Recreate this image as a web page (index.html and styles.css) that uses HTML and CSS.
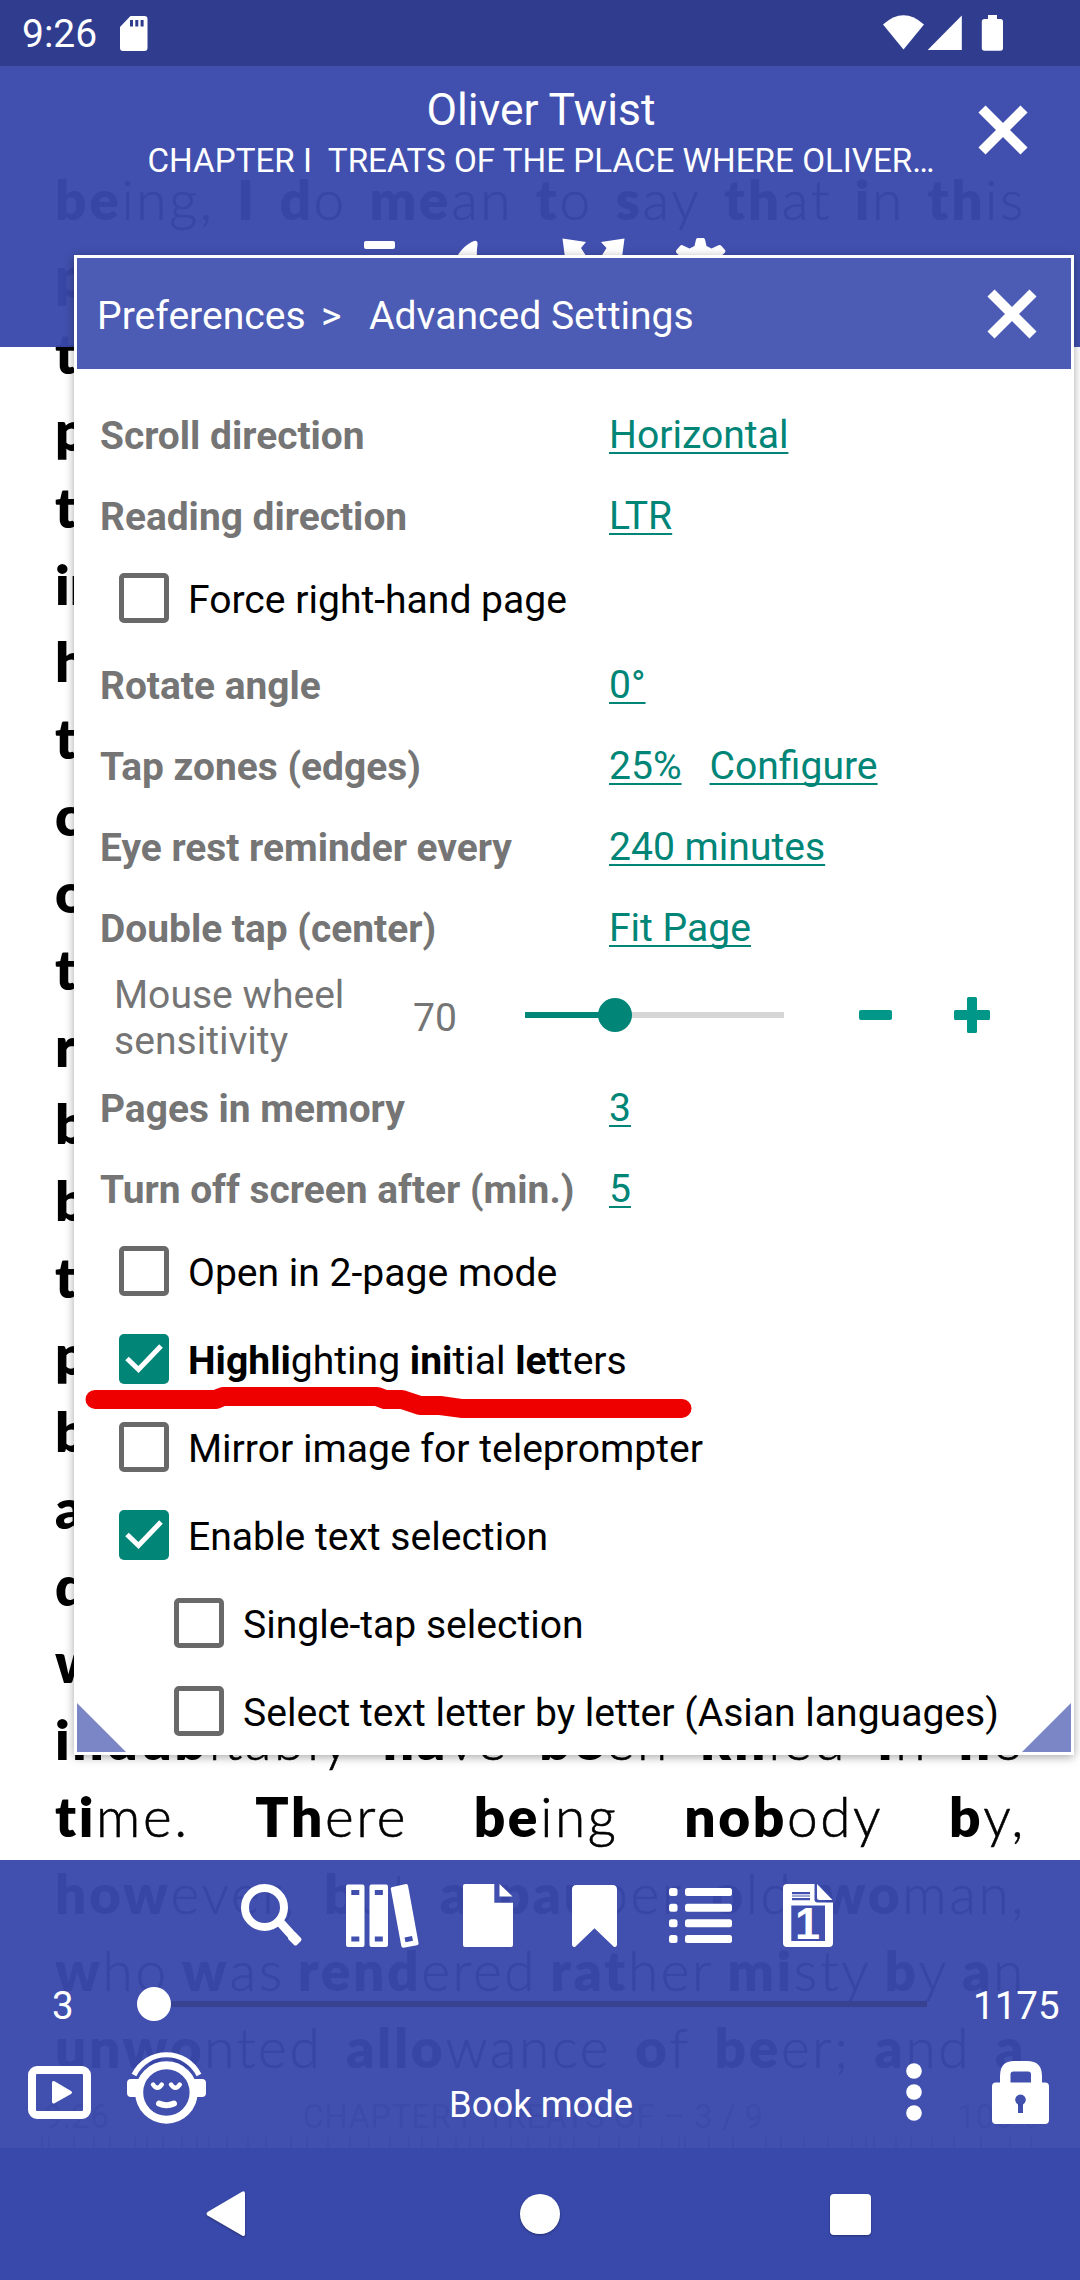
FILE: index.html
```html
<!DOCTYPE html>
<html lang="en">
<head>
<meta charset="utf-8">
<title>Oliver Twist</title>
<link rel="stylesheet" href="styles.css">
</head>
<body>
<div class="screen">
  <div class="book">
    <div class="line"><span><b>be</b>ing,</span><span><b>I</b></span><span><b>d</b>o</span><span><b>me</b>an</span><span><b>t</b>o</span><span><b>s</b>ay</span><span><b>th</b>at</span><span><b>i</b>n</span><span><b>th</b>is</span></div>
    <div class="line"><b>p</b></div>
    <div class="line"><b>t</b></div>
    <div class="line"><b>p</b></div>
    <div class="line"><b>t</b></div>
    <div class="line tight"><b>in</b></div>
    <div class="line"><b>h</b></div>
    <div class="line"><b>t</b></div>
    <div class="line"><b>c</b></div>
    <div class="line"><b>o</b></div>
    <div class="line"><b>t</b></div>
    <div class="line"><b>r</b></div>
    <div class="line"><b>b</b></div>
    <div class="line"><b>b</b></div>
    <div class="line"><b>t</b></div>
    <div class="line"><b>p</b></div>
    <div class="line"><b>b</b></div>
    <div class="line"><b>a</b></div>
    <div class="line"><b>d</b></div>
    <div class="line"><b>w</b></div>
    <div class="line"><span><b>indub</b>itably</span><span><b>ha</b>ve</span><span><b>be</b>en</span><span><b>kil</b>led</span><span><b>i</b>n</span><span><b>n</b>o</span></div>
    <div class="line"><span><b>ti</b>me.</span><span><b>Th</b>ere</span><span><b>be</b>ing</span><span><b>nob</b>ody</span><span><b>b</b>y,</span></div>
    <div class="line"><span><b>how</b>ever,</span><span><b>b</b>ut</span><span><b>a</b></span><span><b>pau</b>per</span><span><b>o</b>ld</span><span><b>wo</b>man,</span></div>
    <div class="line"><span><b>w</b>ho</span><span><b>w</b>as</span><span><b>rend</b>ered</span><span><b>rat</b>her</span><span><b>mi</b>sty</span><span><b>b</b>y</span><span><b>a</b>n</span></div>
    <div class="line"><span><b>unwo</b>nted</span><span><b>allo</b>wance</span><span><b>o</b>f</span><span><b>be</b>er;</span><span><b>a</b>nd</span><span><b>a</b></span></div>
    <div class="page-status"><span>9:26</span><span>CHAPTER I&nbsp; TREATS OF – 3 / 9</span><span>100%</span></div>
    <svg class="ticks" width="1080" height="11"><path d="M42 0v11M49 0v11M74 0v11M94 0v11M110 0v11M135 0v11M147 0v11M163 0v11M182 0v11M197 0v11M209 0v11M227 0v11M248 0v11M266 0v11M291 0v11M307 0v11M328 0v11M350 0v11M369 0v11M390 0v11M409 0v11M422 0v11M438 0v11M456 0v11M470 0v11M483 0v11M511 0v11M528 0v11M550 0v11M560 0v11M574 0v11M599 0v11M619 0v11M639 0v11M662 0v11M679 0v11M685 0v11M709 0v11M733 0v11M766 0v11M781 0v11M804 0v11M828 0v11M852 0v11M866 0v11M874 0v11M896 0v11M911 0v11M932 0v11M954 0v11M981 0v11M1010 0v11M1031 0v11"/></svg>
  </div>

  <div class="chrome">
    <div class="statusbar">
      <span class="clock">9:26</span>
      <svg class="sd" width="28" height="35" viewBox="0 0 28 35"><path fill="#fff" fill-rule="evenodd" d="M10.500 0H24.500Q27.500 0 27.500 3V32Q27.500 35 24.500 35H3Q0 35 0 32V11ZM10 4v6.500h3V4ZM15.300 4v6.500h3V4ZM20.600 4v6.500h3V4Z"/></svg>
      <svg width="120" height="36" viewBox="883 15 120 36"><g fill="#fff"><path d="M883 24.500Q903.500 6 924 24.500L903.500 49.500Z"/><path d="M927.700 50H961.800V15.500Z"/><path d="M988 15h9v4h3.500q2.500 0 2.500 2.500v26.500q0 2.700-2.500 2.700h-16q-2.700 0-2.700-2.700v-26.500q0-2.500 2.700-2.500H988Z"/></g></svg>
    </div>
    <header class="topbar">
      <div class="titles">
        <div class="title">Oliver Twist</div>
        <div class="chapter">CHAPTER I&nbsp; TREATS OF THE PLACE WHERE OLIVER…</div>
      </div>
      <svg class="close" width="50" height="50" viewBox="0 0 50 50"><path d="M4 4 46 46M46 4 4 46"/></svg>
      <svg class="quick" width="362" height="50" viewBox="364 238 362 50"><g fill="#fff"><rect x="364" y="241" width="31" height="8" rx="2"/><path d="M453 270C455 255 464 245 474 241Q478 240 477.500 245C475 260 480 268 490 275Z"/><path d="M562.500 238.500 586 242 581 248 592 265 582 275 566 265ZM624.500 238.500 601 242 606.500 248 596 265 606 275 621 265Z"/><path d="M697.500 238H703.500Q704.700 238 705 239.500L706.500 246 711.500 248.500 718 245.500Q720 244.500 721.500 246L725 250Q726 251.500 724.500 253L718 259V270H683V259L676.500 253Q675.500 251.500 676.500 250L680 246Q681.500 244.500 683 245.500L689.500 248.500 694.500 246 696 239.500Q696.300 238 697.500 238Z"/></g></svg>
    </header>
    <div class="reading-area"></div>
    <footer class="bottombar">
      <div class="tools">
        <svg width="62" height="63" viewBox="0 0 62 63"><circle cx="23.500" cy="23.500" r="19.500" fill="none" stroke="#fff" stroke-width="8"/><path d="M37 36 52 52.500 56 57" stroke="#fff" stroke-width="9"/><path d="M53 50 58.500 55.500 54.500 59.500 49 54Z" fill="#fff" stroke="#fff" stroke-width="4" stroke-linejoin="round"/></svg>
        <svg class="library" width="73" height="64" viewBox="0 0 73 64"><path fill="#fff" fill-rule="evenodd" d="M2 .500H16.500q2 0 2 2V61q0 2-2 2H2q-2 0-2-2V2.500q0-2 2-2ZM5.300 6v5h8V6ZM5.300 52.500v5h8v-5ZM25.500.500H40q2 0 2 2V61q0 2-2 2H25.500q-2 0-2-2V2.500q0-2 2-2ZM28.800 6v5h8V6ZM28.800 52.500v5h8v-5Z"/><path fill="#fff" fill-rule="evenodd" d="M46.500 3 60 .100q1.500-.300 2 1.500L72.500 59q.2 2-1.500 2.300L57.500 63.800q-1.800.2-2.200-1.800L44.800 5q-.3-1.600 1.700-2ZM58.500 53.500l1 4.700 7.500-1.400-1-4.700Z"/></svg>
        <svg class="file" width="50" height="63" viewBox="0 0 50 63"><g fill="#fff"><path d="M2 0H31.300V18.700H50V61q0 2-2 2H2q-2 0-2-2V2Q0 0 2 0Z"/><path d="M36.500 0V12.500H49.500Z"/></g></svg>
        <svg class="bookmark" width="45" height="62" viewBox="0 0 45 62"><path fill="#fff" d="M4.500 0H40.500Q45 0 45 4.500V60Q44 63 41.500 61.500L22.500 43.300 3.500 61.500Q1 63 0 60V4.500Q0 0 4.500 0Z"/></svg>
        <svg class="contents" width="63" height="55" viewBox="0 0 63 55"><g fill="#fff"><rect width="8.500" height="8" rx="2.500"/><rect y="15.700" width="8.500" height="8" rx="2.500"/><rect y="31.300" width="8.500" height="8" rx="2.500"/><rect y="47" width="8.500" height="8" rx="2.500"/><rect x="16" width="47" height="8" rx="2.500"/><rect x="16" y="15.700" width="47" height="8" rx="2.500"/><rect x="16" y="31.300" width="47" height="8" rx="2.500"/><rect x="16" y="47" width="47" height="8" rx="2.500"/></g></svg>
        <svg class="single" width="50" height="63" viewBox="0 0 50 63"><path fill="#fff" fill-rule="evenodd" d="M4 0H31.500V15.500Q31.500 18.500 34.500 18.500H50V59q0 4-4 4H4q-4 0-4-4V4Q0 0 4 0ZM9 8v2.200H27V8ZM9 11.600v.8H27v-.8ZM9 14v2.200H27V14ZM8.300 21.500V57H42V21.500Z"/><path fill="#fff" d="M34 0V13.500Q34 16 36.500 16H49.500Z"/><text class="page-one" x="12" y="55">1</text></svg>
      </div>
      <div class="progress">
        <span class="current">3</span>
        <div class="track"><i class="knob"></i></div>
        <span class="total">1175</span>
      </div>
      <div class="modes">
        <svg width="63" height="53" viewBox="0 0 63 53"><rect x="4" y="4" width="55" height="45" rx="5" fill="none" stroke="#fff" stroke-width="8"/><path fill="#fff" d="M24 17Q24 14 27 15.500L43 25Q45 26.500 43 28L27 37Q24 38.500 24 35.500Z"/></svg>
        <svg class="face" width="79" height="74" viewBox="127 2050 79 74"><g fill="none" stroke="#fff"><circle cx="166.400" cy="2092.500" r="27.200" stroke-width="8"/><path d="M134 2075A36.200 36.200 0 0 1 199 2075" stroke-width="5.200"/><path d="M153 2084.500q4.400 6.500 8.800 0M171 2084.500q4.400 6.500 8.800 0" stroke-width="4.500" stroke-linecap="round"/><path d="M159 2103.500q7.400 3.500 15 0" stroke-width="6" stroke-linecap="round"/></g><path fill="#fff" d="M131 2079h9v18h-9q-4 0-4-4v-10q0-4 4-4ZM193 2079h9q4 0 4 4v10q0 4-4 4h-9Z"/></svg>
        <span class="mode">Book mode</span>
        <svg class="dots" width="16" height="58" viewBox="0 0 16 58"><g fill="#fff"><circle cx="8" cy="8" r="7.800"/><circle cx="8" cy="29" r="7.800"/><circle cx="8" cy="50" r="7.800"/></g></svg>
        <svg class="lock" width="57" height="63" viewBox="0 0 57 63"><path fill="#fff" fill-rule="evenodd" d="M8 21.500V15Q8 0 22 0H35Q50 0 50 15V21.500H53q4 0 4 4V59q0 4-4 4H4q-4 0-4-4V25.500q0-4 4-4ZM18.500 21.500H39V13.500q0-3-3-3H21.500q-3 0-3 3ZM26 43.500V52h5V43.500a5.300 5.300 0 1 0-5 0Z"/></svg>
      </div>
    </footer>
    <nav class="navbar">
      <svg width="40" height="46" viewBox="0 0 40 46"><path fill="#fff" d="M36 .700Q39 -.500 39 2.500V43Q39 46 36 44.500L1.500 24.500Q-.500 22.800 1.500 21Z"/></svg>
      <svg class="home" width="40" height="40" viewBox="0 0 40 40"><circle cx="20" cy="20" r="20" fill="#fff"/></svg>
      <svg width="41" height="41" viewBox="0 0 41 41"><rect width="41" height="41" rx="4" fill="#fff"/></svg>
    </nav>
  </div>

  <section class="dialog">
    <div class="dialog-head">
      <span class="crumb">Preferences</span><span class="sep">&gt;</span><span>Advanced Settings</span>
      <svg class="close" width="50" height="50" viewBox="0 0 50 50"><path d="M4 4 46 46M46 4 4 46"/></svg>
    </div>
    <div class="settings">
      <div class="row"><span class="label">Scroll direction</span><a>Horizontal</a></div>
      <div class="row"><span class="label">Reading direction</span><a>LTR</a></div>
      <div class="check"><i class="box"></i>Force right-hand page</div>
      <div class="row"><span class="label">Rotate angle</span><a>0°</a></div>
      <div class="row"><span class="label">Tap zones (edges)</span><a>25%</a><a class="second">Configure</a></div>
      <div class="row"><span class="label">Eye rest reminder every</span><a>240 minutes</a></div>
      <div class="row"><span class="label">Double tap (center)</span><a>Fit Page</a></div>
      <div class="wheel">
        <span class="wheel-label">Mouse wheel<br>sensitivity</span>
        <span class="wheel-value">70</span>
        <div class="slider"><i class="thumb"></i></div>
        <svg class="minus" width="33" height="10"><rect width="33" height="10" rx="2" fill="#009688"/></svg>
        <svg class="plus" width="36" height="36"><path fill="#009688" d="M14.500 0h7q1.500 0 1.500 1.500V13h11.500q1.500 0 1.500 1.500v7q0 1.500-1.500 1.500H23v11.500q0 1.500-1.500 1.500h-7q-1.500 0-1.500-1.500V23H1.500Q0 23 0 21.500v-7Q0 13 1.500 13H13V1.500Q13 0 14.500 0Z"/></svg>
      </div>
      <div class="row"><span class="label">Pages in memory</span><a>3</a></div>
      <div class="row"><span class="label">Turn off screen after (min.)</span><a>5</a></div>
      <div class="check"><i class="box"></i>Open in 2-page mode</div>
      <div class="check"><svg class="tick" width="50" height="50" viewBox="0 0 50 50"><rect width="50" height="50" rx="5"/><path d="M8 24.500 19.500 35.500 42 12"/></svg><span><b>Highli</b>ghting <b>ini</b>tial <b>let</b>ters</span></div>
      <div class="check"><i class="box"></i>Mirror image for teleprompter</div>
      <div class="check"><svg class="tick" width="50" height="50" viewBox="0 0 50 50"><rect width="50" height="50" rx="5"/><path d="M8 24.500 19.500 35.500 42 12"/></svg>Enable text selection</div>
      <div class="check nested"><i class="box"></i>Single-tap selection</div>
      <div class="check nested"><i class="box"></i>Select text letter by letter (Asian languages)</div>
    </div>
    <svg class="marker" width="607" height="32" viewBox="85 1387 607 32"><path d="M95 1399.400H216L223 1396.500H377L385 1399.500H402L420 1405.500H440L461 1408.400H682" fill="none" stroke="#e00" stroke-width="19" stroke-linecap="round" stroke-linejoin="round"/></svg>
    <i class="grip left"></i><i class="grip right"></i>
  </section>
</div>
</body>
</html>
```
FILE: styles.css
```css
body { margin: 0; background: #fff; }

.screen {
  position: relative;
  display: grid;
  width: 1080px;
  height: 2280px;
  overflow: hidden;
  font-family: Roboto, "Liberation Sans", sans-serif;
  font-size: 38.5px;
  line-height: 45.5px;
  color: #000;
}
.book, .chrome { grid-area: 1 / 1; }
svg { display: block; flex: none; }

/* Book page under the reader controls */
.book {
  display: flex;
  flex-direction: column;
  padding-top: 161px;
  font-family: Lato, "Open Sans", sans-serif;
  font-size: 55px;
  font-weight: 300;
}
.line {
  display: flex;
  justify-content: space-between;
  width: 971px;
  height: 77px;
  margin-left: 55px;
  line-height: 77px;
  letter-spacing: 2.6px;
  white-space: nowrap;
  -webkit-text-stroke: .6px #000;
}
.line b { font-weight: 800; -webkit-text-stroke: 0; }
.line.tight { letter-spacing: 0; }
.page-status {
  display: flex;
  justify-content: space-between;
  width: 994px;
  margin: 12px 0 0 44px;
  font: 400 32.5px/39px Roboto, sans-serif;
  letter-spacing: .6px;
  color: #777;
}
.ticks { margin-top: auto; margin-bottom: 132px; stroke: #777; stroke-width: 1.5; }

/* Reader controls */
.chrome { position: relative; display: flex; flex-direction: column; color: #fff; }
.statusbar {
  display: flex;
  align-items: center;
  box-sizing: border-box;
  height: 66px;
  padding: 0 77px 0 22px;
  background: #303d8f;
}
.statusbar .clock { margin-top: 3px; font-size: 39px; }
.statusbar .sd { margin: 0 auto 0 23px; }
.topbar {
  position: relative;
  height: 281px;
  background: rgba(57, 73, 171, .96);
}
.titles { padding: 16px 0 0 2px; text-align: center; white-space: nowrap; }
.title { font-size: 44.4px; line-height: 56px; }
.chapter { font-size: 33.2px; line-height: 45px; }
.close { fill: none; stroke: #fff; stroke-width: 10; }
.topbar .close { position: absolute; left: 978px; top: 39px; }
.quick { position: absolute; left: 364px; top: 172px; }
.reading-area { flex: 1; }
.bottombar {
  box-sizing: border-box;
  height: 288px;
  background: rgba(57, 73, 171, .96);
}
.tools {
  display: flex;
  align-items: center;
  height: 63px;
  padding: 24px 0 0 241px;
}
.library { margin-left: 43px; }
.file { margin-left: 44px; }
.bookmark { margin-left: 59px; }
.contents { margin-left: 52px; }
.single { margin-left: 51px; }
.page-one { font: bold 45px "Liberation Sans", Arial, sans-serif; fill: #fff; }
.progress { display: flex; align-items: center; height: 46px; margin-top: 34px; }
.current, .total { padding-top: 3px; }
.current { width: 94px; padding-left: 52px; box-sizing: border-box; }
.track { position: relative; width: 774px; height: 6px; margin-left: 59px; background: #374390; }
.knob { position: absolute; left: -16px; top: -14px; width: 34px; height: 34px; border-radius: 50%; background: #fff; }
.total { margin-left: 46px; }
.modes { display: flex; align-items: center; height: 74px; margin: 28px 0 0 28px; }
.face { margin-left: 36px; margin-top: -10px; }
.mode { margin: 25px 0 0 243px; font-size: 36.4px; }
.dots { margin-left: auto; }
.lock { margin: 0 31px 0 70px; }
.navbar {
  display: flex;
  align-items: center;
  justify-content: space-between;
  height: 132px;
  padding: 0 209px 0 206px;
  background: #3949ab;
}
.navbar svg { overflow: visible; filter: drop-shadow(0 1px 1px rgba(0, 0, 0, .35)); }
.navbar .home { margin-left: 3px; }

/* Preferences dialog */
.dialog {
  position: absolute;
  left: 74px;
  top: 255px;
  width: 994px;
  height: 1494px;
  border: 3px solid #fff;
  background: #fff;
  box-shadow: 0 2px 9px rgba(0, 0, 0, .35);
  font-size: 39.1px;
}
.dialog-head {
  display: flex;
  align-items: center;
  height: 111px;
  padding: 0 34px 0 20px;
  background: #4c5bb3;
  color: #fff;
}
.dialog-head span { padding-top: 6px; white-space: nowrap; }
.crumb { width: 224px; }
.sep { width: 48px; }
.dialog-head .close { margin-left: auto; }
.settings { padding-top: 26px; white-space: nowrap; }
.row { display: flex; align-items: center; height: 81px; padding-left: 23px; }
.label { width: 509px; font-weight: 700; font-size: 38.9px; color: #757575; }
a { color: #008577; text-decoration: underline; text-decoration-thickness: 2px; text-underline-offset: 4px; text-decoration-skip-ink: none; }
.second { margin-left: 28px; }
.check { display: flex; align-items: center; height: 88px; gap: 19px; padding-left: 42px; }
.check.nested { padding-left: 97px; }
.box, .tick { position: relative; top: -3px; }
.box { flex: none; box-sizing: border-box; width: 50px; height: 50px; border: 5.5px solid #696969; border-radius: 5px; }
.tick rect { fill: #008577; }
.tick path { fill: none; stroke: #fff; stroke-width: 5; }
.wheel { display: flex; align-items: center; height: 99px; padding-left: 37px; color: #757575; }
.wheel-label { width: 299px; }
.wheel-value { width: 112px; }
.slider { position: relative; width: 259px; height: 6px; margin-top: -7px; background: linear-gradient(90deg, #008577 90px, #d6d6d6 90px); }
.thumb { position: absolute; left: 73px; top: -14px; width: 34px; height: 34px; border-radius: 50%; background: #008577; }
.minus { margin: -7px 0 0 75px; }
.plus { margin: -7px 0 0 62px; }
.marker { position: absolute; left: 8px; top: 1129px; }
.grip { position: absolute; bottom: 0; width: 49px; height: 49px; background: #7b86c6; }
.grip.left { left: 0; clip-path: polygon(0 0, 100% 100%, 0 100%); }
.grip.right { right: 0; clip-path: polygon(100% 0, 100% 100%, 0 100%); }
```
